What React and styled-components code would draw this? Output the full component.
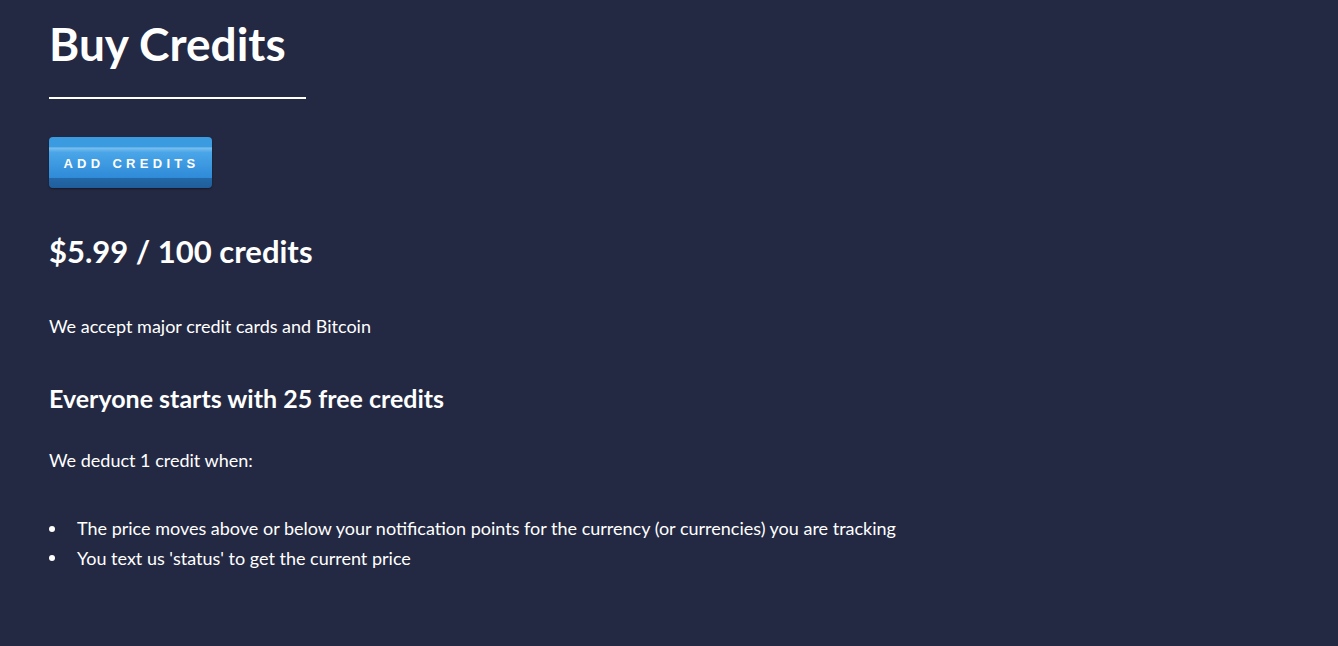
import React from 'react';
import styled, { createGlobalStyle } from 'styled-components';

const Global = createGlobalStyle`
  html, body {
    margin: 0;
    background: #242943;
  }
  body {
    font-family: "Source Sans Pro", Lato, "Noto Sans", sans-serif;
    color: #ffffff;
  }
`;

const Page = styled.main`
  min-height: 646px;
  padding: 17px 49px 40px;
  box-sizing: border-box;
`;

const Title = styled.h1`
  display: inline-block;
  margin: 0;
  font-size: 46px;
  font-weight: 700;
  line-height: 54px;
  padding-bottom: 26px;
  border-bottom: 2px solid #ffffff;
  width: 257px;
  white-space: nowrap;
`;

const Button = styled.button`
  display: block;
  margin-top: 38px;
  width: 163px;
  height: 51px;
  border: 0;
  border-radius: 4px;
  padding: 2px 0 0 2px;
  cursor: pointer;
  background: linear-gradient(
    to bottom,
    #3a9be0 0%,
    #3a9be0 20%,
    #7cc0ee 21%,
    #4aa6e8 30%,
    #2f8ad8 80%,
    #2468a8 81%,
    #1f5e9c 100%
  );
  box-shadow: 0 1px 2px rgba(0, 0, 0, 0.4);
  color: #ffffff;
  font-family: "Liberation Sans", Arial, sans-serif;
  font-weight: 700;
  font-size: 13px;
  letter-spacing: 4.3px;
  text-transform: uppercase;
`;

const Price = styled.h2`
  margin: 45px 0 0;
  font-size: 31px;
  line-height: 36px;
  font-weight: 700;
`;

const Text = styled.p`
  margin: ${p => p.$top}px 0 0;
  font-size: 18px;
  line-height: 26px;
`;

const Sub = styled.h3`
  margin: 44px 0 0;
  font-size: 25px;
  line-height: 30px;
  font-weight: 700;
`;

const List = styled.ul`
  margin: 41px 0 0;
  padding: 0;
  list-style: none;
  font-size: 18px;
  line-height: 29.5px;
`;

const Item = styled.li`
  display: flex;
  align-items: center;

  &::before {
    content: "";
    flex: none;
    width: 6px;
    height: 6px;
    border-radius: 50%;
    background: #ffffff;
    margin: 0 22px 0 0;
  }
`;

export default function App() {
  return (
    <>
      <Global />
      <Page>
        <Title>Buy Credits</Title>
        <Button>Add Credits</Button>
        <Price>$5.99 / 100 credits</Price>
        <Text $top={44}>We accept major credit cards and Bitcoin</Text>
        <Sub>Everyone starts with 25 free credits</Sub>
        <Text $top={34}>We deduct 1 credit when:</Text>
        <List>
          <Item>The price moves above or below your notification points for the currency (or currencies) you are tracking</Item>
          <Item>You text us 'status' to get the current price</Item>
        </List>
      </Page>
    </>
  );
}
